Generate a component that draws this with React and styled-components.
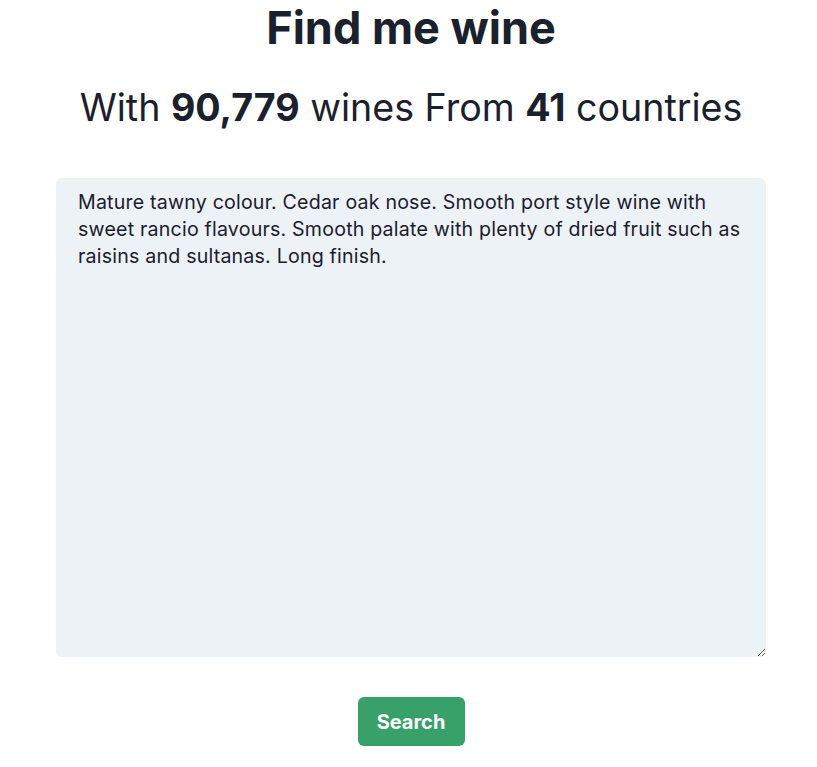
import React from "react";
import styled, { createGlobalStyle } from "styled-components";

const Global = createGlobalStyle`
  html, body { margin: 0; padding: 0; background: #fff; }
  body { font-family: Inter, "Noto Sans", sans-serif; color: #1A202C; }
`;

const Page = styled.main`
  display: flex;
  flex-direction: column;
  align-items: center;
  width: 710px;
  margin-left: 56px;
`;

const Title = styled.h1`
  margin: 0;
  padding-top: 2px;
  font-size: 45px;
  font-weight: 700;
  line-height: 52px;
  color: #1A202C;
`;

const Subtitle = styled.h2`
  margin: 31px 0 0;
  font-size: 37.6px;
  font-weight: 400;
  line-height: 46px;
  color: #1A202C;
  b { font-weight: 700; }
`;

const Area = styled.textarea`
  box-sizing: border-box;
  display: block;
  margin-top: 47px;
  width: 710px;
  height: 479px;
  border: none;
  border-radius: 6px;
  background: #EDF2F7;
  padding: 11px 22px;
  font-family: Inter, "Noto Sans", sans-serif;
  font-size: 19.6px;
  letter-spacing: 0.2px;
  line-height: 27px;
  color: #1A202C;
  resize: both;
  outline: none;
`;

const Button = styled.button`
  margin-top: 40px;
  width: 107px;
  height: 49px;
  border: none;
  border-radius: 6px;
  background: #38A169;
  color: #fff;
  font-family: Inter, "Noto Sans", sans-serif;
  font-size: 20px;
  font-weight: 700;
  cursor: pointer;
`;

export default function App() {
  return (
    <>
      <Global />
      <Page>
        <Title>Find me wine</Title>
        <Subtitle>
          With <b>90,779</b> wines From <b>41</b> countries
        </Subtitle>
        <Area
          spellCheck={false}
          defaultValue="Mature tawny colour. Cedar oak nose. Smooth port style wine with sweet rancio flavours. Smooth palate with plenty of dried fruit such as raisins and sultanas. Long finish."
        />
        <Button>Search</Button>
      </Page>
    </>
  );
}
